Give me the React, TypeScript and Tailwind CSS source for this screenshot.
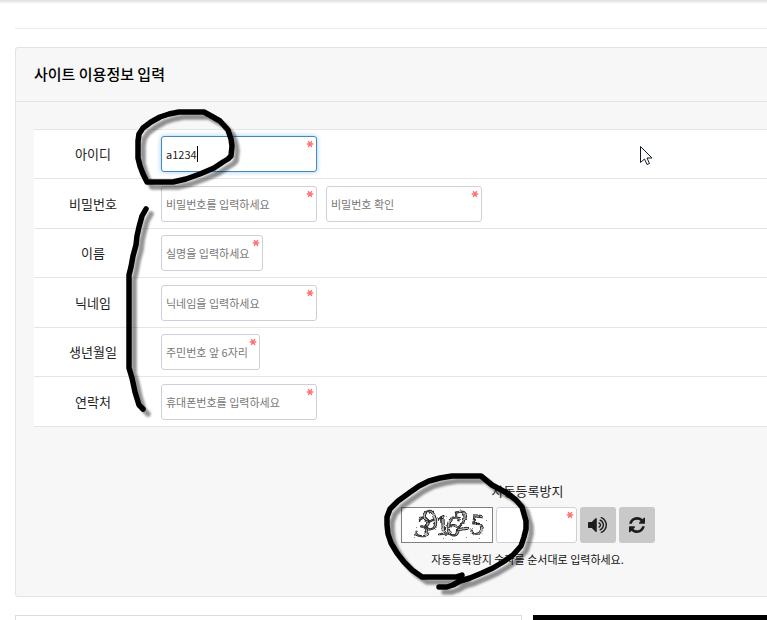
import React from "react";

const FONT = "font-['Noto_Sans_CJK_KR','Noto_Sans',sans-serif]";

type FieldProps = {
  id: string;
  label: string;
  width: string;
  placeholder?: string;
  value?: string;
  type?: string;
  focused?: boolean;
};

function RequiredMark() {
  return (
    <svg
      aria-hidden="true"
      viewBox="0 0 8 8"
      className="pointer-events-none absolute right-[3px] top-1 size-2"
      fill="none"
      stroke="#ff6464"
      strokeWidth="1.500"
      strokeLinecap="round"
      opacity="0.9"
    >
      <path d="M1.300 4h5.400M2.500 1.600l3 4.800M5.500 1.600l-3 4.800" />
    </svg>
  );
}

function Field({ id, label, width, placeholder, value, type = "text", focused }: FieldProps) {
  return (
    <span className={`relative block h-9 ${width}`}>
      <input
        id={id}
        aria-label={label}
        type={type}
        placeholder={placeholder}
        defaultValue={value}
        className={`block h-9 w-full rounded-[3px] border bg-white px-1 text-[11px] text-[#222] outline-none placeholder:text-[#777] ${
          focused ? "border-[#4289c0] shadow-[0_0_5px_#9ecbed]" : "border-[#cfcfdc]"
        }`}
      />
      {focused && <span className="absolute left-9 top-2.5 h-4 w-px bg-black" />}
      <RequiredMark />
    </span>
  );
}

const rows: { label: string; fields: FieldProps[] }[] = [
  { label: "아이디", fields: [{ id: "userid", label: "아이디", width: "w-[156px]", value: "a1234", focused: true }] },
  {
    label: "비밀번호",
    fields: [
      { id: "password", label: "비밀번호", width: "w-[156px]", placeholder: "비밀번호를 입력하세요", type: "password" },
      { id: "password2", label: "비밀번호 확인", width: "w-[156px]", placeholder: "비밀번호 확인", type: "password" },
    ],
  },
  { label: "이름", fields: [{ id: "name", label: "이름", width: "w-[102px]", placeholder: "실명을 입력하세요" }] },
  { label: "닉네임", fields: [{ id: "nick", label: "닉네임", width: "w-[156px]", placeholder: "닉네임을 입력하세요" }] },
  { label: "생년월일", fields: [{ id: "birth", label: "생년월일", width: "w-[99px]", placeholder: "주민번호 앞 6자리" }] },
  { label: "연락처", fields: [{ id: "phone", label: "연락처", width: "w-[156px]", placeholder: "휴대폰번호를 입력하세요" }] },
];

const specks = [
  [18, 9], [27, 5], [37, 26], [44, 8], [60, 7], [74, 9], [80, 19], [77, 30], [64, 29], [50, 31],
  [33, 21], [14, 19], [22, 23], [12, 29], [70, 20], [41, 30], [55, 11], [24, 13], [47, 24], [84, 12],
];

function CaptchaImage() {
  return (
    <svg
      role="img"
      aria-label="자동등록방지 이미지"
      viewBox="0 0 90 34"
      className="h-9 w-[92px] overflow-visible border border-[#808080] bg-white"
    >
      <defs>
        <filter id="wobble" x="-10%" y="-10%" width="120%" height="120%">
          <feTurbulence type="fractalNoise" baseFrequency="0.35" numOctaves="2" seed="3" result="n" />
          <feDisplacementMap in="SourceGraphic" in2="n" scale="3" xChannelSelector="R" yChannelSelector="G" />
        </filter>
      </defs>
      <g filter="url(#wobble)" className="font-['Liberation_Serif',serif]" fontSize="29" fill="#b5b5b5" stroke="#1a1a1a" strokeWidth="0.9">
        <text x="12 24 34 43 54 67" y="27 23 27 27 23 25" rotate="12 -16 -3 6 -8 8">391625</text>
      </g>
      {specks.map(([x, y]) => (
        <rect key={`${x}-${y}`} x={x} y={y} width="1" height="1" fill="#888" />
      ))}
    </svg>
  );
}

function PenMarks() {
  return (
    <svg
      aria-hidden="true"
      className="pointer-events-none absolute left-0 top-0 h-[620px] w-[767px]"
      viewBox="0 0 767 620"
      fill="none"
    >
      <defs>
        <filter id="pen-shadow" x="-10%" y="-10%" width="130%" height="130%">
          <feDropShadow dx="5" dy="5" stdDeviation="1.3" floodColor="#000" floodOpacity="0.42" />
        </filter>
      </defs>
      <g filter="url(#pen-shadow)" stroke="#000" strokeWidth="5.500" strokeLinecap="round" strokeLinejoin="round">
        <path d="M228 159l3-3 1-10-1-7-3-9-8-9-7-4-9-5h-25l-10 2-9 3-9 5-8 6-4 6-1 7v17l2 8 3 8 4 8h26l13-3 14-5 14-6 9-6z" />
        <path d="M146 209l-4 7-3 11-2 9-1 9-3 11-2 11-2 8v93l3 10 3 14 4 13 4 4" />
        <path d="M439 587h8l6-2 7-4 10-3 12-5 11-5 10-6 10-7 8-9 3-9 2-8v-8l-2-7-2-7-6-7-9-7-15-8-11-9h-29l-12 2-11 3-10 5-10 7-11 8-8 8-3 8v8l1 9 3 9 6 10 7 9 8 8 10 7h34l6-2" />
      </g>
      <path d="M640.500 146.500v16l4-3.500 2.500 5.500 2.500-1-2.500-5.500h5z" fill="#fff" stroke="#111827" strokeWidth="1" />
    </svg>
  );
}

export default function App() {
  return (
    <div className={`relative h-screen overflow-hidden bg-white text-black ${FONT}`}>
      <div className="h-1 bg-linear-to-b from-[#dedede] to-white" />
      <main className="min-w-[1040px] pl-[15px] pt-6">
        <hr className="border-[#ebebeb]" />

        <form className="mt-[18px] rounded-[3px] border border-[#dbe7e3] bg-[#f7f7f7]" onSubmit={(e) => e.preventDefault()}>
          <h2 className="border-b border-[#dbe7e3] px-[18px] pb-[17px] pt-[15px] text-[15px] font-medium leading-[21px]">
            사이트 이용정보 입력
          </h2>
          <div className="px-[18px] pb-[25px] pt-[27px]">
            <div className="border-t border-[#e5e5e5] bg-white">
              {rows.map((row) => (
                <div key={row.label} className="flex items-start border-b border-[#e5e5e5] odd:h-[49px] odd:pt-1.5 even:h-[50px] even:pt-[7px]">
                  <label htmlFor={row.fields[0].id} className="w-[118px] text-center text-[13px] leading-9 text-[#222]">
                    {row.label}
                  </label>
                  <div className="ml-[9px] flex gap-[9px]">
                    {row.fields.map((f) => (
                      <Field key={f.id} {...f} />
                    ))}
                  </div>
                </div>
              ))}
            </div>

            <div className="mt-[52px] flex flex-col items-center">
              <label htmlFor="captcha" className="mb-1 text-[13px] leading-6 text-[#222]">
                자동등록방지
              </label>
              <div className="flex gap-[3px]">
                <CaptchaImage />
                <Field id="captcha" label="자동등록방지 숫자" width="w-[81px]" />
                <button type="button" aria-label="숫자음성듣기" className="grid size-9 place-items-center rounded-[3px] bg-[#c9c9c9] text-[#1c1c1c]">
                  <svg viewBox="0 128 1664 1536" className="h-[18px] w-[19px]" fill="currentColor">
                    <path d="M768 352v1088q0 26-19 45t-45 19-45-19l-333-333H64q-26 0-45-19t-19-45V704q0-26 19-45t45-19h262l333-333q19-19 45-19t45 19 19 45zm384 544q0 76-42.500 141.500T997 1131q-10 5-25 5-26 0-45-18.500T908 1072q0-21 12-35.500t29-25 34-23 29-36 12-56.500-12-56.500-29-36-34-23-29-25-12-35.500q0-27 19-45.500t45-18.500q15 0 25 5 70 27 112.500 93t42.500 142zm256 0q0 153-85 282.500T1098 1371q-13 5-25 5-27 0-46-19t-19-45q0-39 39-59 56-29 76-44 74-54 115.500-135.500T1280 896t-41.500-173.500T1123 587q-20-15-76-44-39-20-39-59 0-26 19-45t45-19q13 0 26 5 140 59 225 188.500t85 282.500zm256 0q0 230-127 422.500T1199 1602q-13 5-26 5-26 0-45-19t-19-45q0-36 39-59 7-4 22.500-10.500t22.500-10.500q46-25 82-51 123-91 192-227t69-289-69-289-192-227q-36-26-82-51-7-4-22.500-10.500T1148 308q-39-23-39-59 0-26 19-45t45-19q13 0 26 5 211 91 338 283.500T1664 896z" />
                  </svg>
                </button>
                <button type="button" aria-label="새로고침" className="grid size-9 place-items-center rounded-[3px] bg-[#c9c9c9] text-[#1c1c1c]">
                  <svg viewBox="0 0 1536 1536" className="size-4" fill="currentColor">
                    <path d="M1511 928q0 5-1 7-64 268-268 434.500T764 1536q-146 0-282.500-55T238 1324l-129 129q-19 19-45 19t-45-19-19-45V960q0-26 19-45t45-19h448q26 0 45 19t19 45-19 45l-137 137q71 66 161 102t187 36q134 0 250-65t186-179q11-17 53-117 8-23 30-23h192q13 0 22.500 9.500t9.500 22.500zM1536 128v448q0 26-19 45t-45 19h-448q-26 0-45-19t-19-45 19-45l138-138Q969 256 768 256q-134 0-250 65T332 500q-11 17-53 117-8 23-30 23H50q-13 0-22.500-9.500T18 608v-7q65-268 270-434.500T768 0q146 0 284 55.500T1297 212l130-129q19-19 45-19t45 19 19 45z" />
                  </svg>
                </button>
              </div>
              <p className="mt-1 text-[11px] leading-6 text-[#111]">자동등록방지 숫자를 순서대로 입력하세요.</p>
            </div>
          </div>
        </form>

        <div className="mt-[18px] grid grid-cols-2 gap-[11px]">
          <div className="h-10 border border-[#dcdcdc] bg-white" />
          <div className="h-10 bg-black" />
        </div>
      </main>
      <PenMarks />
    </div>
  );
}
